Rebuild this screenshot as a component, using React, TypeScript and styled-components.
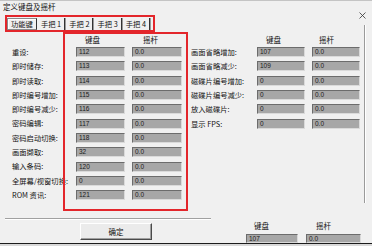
import React from 'react';
import styled, { createGlobalStyle } from 'styled-components';

const GlobalStyle = createGlobalStyle`
  html, body {
    margin: 0;
    padding: 0;
    background: #f0f0f0;
  }
  body {
    font-family: "Noto Sans CJK SC", "Liberation Sans", sans-serif;
  }
`;

const ROW_H = 14.3;
const RED = '#e3262b';

const leftRows = [
  { label: '重设:', key: '112' },
  { label: '即时储存:', key: '113' },
  { label: '即时读取:', key: '114' },
  { label: '即时编号增加:', key: '115' },
  { label: '即时编号减少:', key: '116' },
  { label: '密码编辑:', key: '117' },
  { label: '密码启动切换:', key: '118' },
  { label: '画面撷取:', key: '32' },
  { label: '输入条码:', key: '120' },
  { label: '全屏幕/视窗切换:', key: '0' },
  { label: 'ROM 资讯:', key: '121' },
];

const rightRows = [
  { label: '画面省略增加:', key: '107' },
  { label: '画面省略减少:', key: '109' },
  { label: '磁碟片编号增加:', key: '0' },
  { label: '磁碟片编号减少:', key: '0' },
  { label: '放入磁碟片:', key: '0' },
  { label: '显示 FPS:', key: '0' },
];

const tabs = ['功能键', '手把 1', '手把 2', '手把 3', '手把 4'];

const Window = styled.div`
  width: 372px;
  height: 246px;
  box-sizing: border-box;
  overflow: hidden;
  background: #f0f0f0;
  border-top: 1px solid #c4c4c4;
  display: flex;
  flex-direction: column;
  color: #111;
`;

const TitleBar = styled.div`
  height: 12px;
  padding-left: 3px;
  font-size: 7.5px;
  line-height: 12px;
  flex-shrink: 0;
`;

const TabRow = styled.div`
  height: 19px;
  display: flex;
  align-items: flex-start;
  flex-shrink: 0;
`;

const TabFrame = styled.div`
  margin: 2px 0 0 5px;
  width: 150px;
  height: 17px;
  box-sizing: border-box;
  border: 2px solid ${RED};
  display: flex;
  align-items: flex-end;
`;

const Tab = styled.div<{ $active?: boolean }>`
  height: 12px;
  line-height: 12px;
  padding: 0 3px;
  font-size: 7.3px;
  white-space: nowrap;
  box-sizing: border-box;
  border-right: 1px solid #333;
  box-shadow: 1px 0 0 #9a9a9a;
  margin-right: 1px;
  ${p =>
    p.$active &&
    `
    border: 1px solid #8a8a8a;
    border-right-color: #333;
    box-shadow: inset 1px 1px 0 #fff;
    height: 12px;
    line-height: 10px;
  `}
`;

const Close = styled.svg`
  margin-left: auto;
  margin-right: 6px;
  margin-top: -1px;
  width: 7px;
  height: 7px;
`;

const Body = styled.div`
  height: 179px;
  display: flex;
  align-items: flex-start;
  flex-shrink: 0;
`;

const LabelCol = styled.div`
  width: 51px;
  padding: 13px 0 0 12px;
`;

const Label = styled.div`
  height: ${ROW_H}px;
  line-height: ${ROW_H}px;
  font-size: 7.3px;
  white-space: nowrap;
`;

const RedBox = styled.div`
  width: 125px;
  height: 179px;
  box-sizing: border-box;
  border: 2px solid ${RED};
  padding: 0 4px 0 11px;
`;

const HeadRow = styled.div<{ $indent?: number }>`
  height: 11px;
  display: flex;
  gap: 7px;
  padding-left: ${p => p.$indent || 0}px;
`;

const HeadCell = styled.div<{ $w: number; $pad: number }>`
  width: ${p => p.$w}px;
  box-sizing: border-box;
  padding-left: ${p => p.$pad}px;
  font-size: 7.5px;
  line-height: 11px;
`;

const FieldRow = styled.div`
  height: ${ROW_H}px;
  display: flex;
  align-items: center;
  gap: 7px;
`;

const Field = styled.div<{ $w: number; $h?: number }>`
  width: ${p => p.$w}px;
  height: ${p => p.$h || 10}px;
  box-sizing: border-box;
  background: #a7a7a7;
  border: 1px solid;
  border-color: #6c6c6c #dadada #dadada #6c6c6c;
  padding-left: 2px;
  font-family: "Liberation Sans", sans-serif;
  font-size: 6.5px;
  line-height: ${p => (p.$h || 10) - 2}px;
  color: #1a1a1a;
`;

const RightPane = styled.div`
  margin: -7px 0 0 3px;
  width: 174px;
  height: 178px;
  box-sizing: border-box;
  padding-top: 9px;
  border-right: 1px solid #9a9a9a;
  box-shadow: 1px 0 0 #fff;
`;

const RightRow = styled.div`
  height: ${ROW_H}px;
  display: flex;
  align-items: center;
`;

const RightLabel = styled.div`
  width: 66px;
  font-size: 7.3px;
  white-space: nowrap;
`;

const RightFields = styled.div`
  display: flex;
  gap: 7px;
`;

const Footer = styled.div`
  height: 32px;
  display: flex;
  flex-shrink: 0;
`;

const FooterLeft = styled.div`
  margin: 7px 0 0 5px;
  width: 206px;
  border-top: 1px solid #a0a0a0;
  box-shadow: inset 0 1px 0 #fff;
  padding-top: 4px;
`;

const Button = styled.div`
  margin-left: 75px;
  width: 72px;
  height: 17px;
  box-sizing: border-box;
  background: #ebebeb;
  border: 1px solid;
  border-color: #fff #4a4a4a #4a4a4a #fff;
  box-shadow: inset -1px -1px 0 #a0a0a0;
  font-size: 7.5px;
  line-height: 15px;
  text-align: center;
`;

const FooterRight = styled.div`
  margin-left: 35px;
  display: grid;
  grid-template-columns: 52px 55px;
  column-gap: 8px;
  grid-template-rows: 10px 9px;
  row-gap: 3px;
  padding-top: 10px;
`;

const FootHead = styled.div<{ $pad: number }>`
  padding-left: ${p => p.$pad}px;
  font-size: 7.5px;
  line-height: 10px;
`;

const BottomEdge = styled.div`
  height: 1px;
  background: #1c1c1c;
  flex-shrink: 0;
`;

const BottomRest = styled.div`
  flex: 1;
  background: #d9d9d9;
`;

export default function App() {
  return (
    <>
      <GlobalStyle />
      <Window>
        <TitleBar>定义键盘及摇杆</TitleBar>
        <TabRow>
          <TabFrame>
            {tabs.map((t, i) => (
              <Tab key={t} $active={i === 0}>
                {t}
              </Tab>
            ))}
          </TabFrame>
          <Close viewBox="0 0 7 7">
            <path d="M0.5 0.5 L6.5 6.5 M6.5 0.5 L0.5 6.5" stroke="#333" strokeWidth="0.8" />
          </Close>
        </TabRow>
        <Body>
          <LabelCol>
            {leftRows.map(r => (
              <Label key={r.label}>{r.label}</Label>
            ))}
          </LabelCol>
          <RedBox>
            <HeadRow>
              <HeadCell $w={49} $pad={9}>键盘</HeadCell>
              <HeadCell $w={50} $pad={11}>摇杆</HeadCell>
            </HeadRow>
            {leftRows.map(r => (
              <FieldRow key={r.label}>
                <Field $w={49}>{r.key}</Field>
                <Field $w={50}>0.0</Field>
              </FieldRow>
            ))}
          </RedBox>
          <RightPane>
            <HeadRow $indent={66}>
              <HeadCell $w={48} $pad={9}>键盘</HeadCell>
              <HeadCell $w={48} $pad={7}>摇杆</HeadCell>
            </HeadRow>
            {rightRows.map(r => (
              <RightRow key={r.label}>
                <RightLabel>{r.label}</RightLabel>
                <RightFields>
                  <Field $w={48}>{r.key}</Field>
                  <Field $w={48}>0.0</Field>
                </RightFields>
              </RightRow>
            ))}
          </RightPane>
        </Body>
        <Footer>
          <FooterLeft>
            <Button>确定</Button>
          </FooterLeft>
          <FooterRight>
            <FootHead $pad={8}>键盘</FootHead>
            <FootHead $pad={10}>摇杆</FootHead>
            <Field $w={52} $h={9}>107</Field>
            <Field $w={55} $h={9}>0.0</Field>
          </FooterRight>
        </Footer>
        <BottomEdge />
        <BottomRest />
      </Window>
    </>
  );
}
